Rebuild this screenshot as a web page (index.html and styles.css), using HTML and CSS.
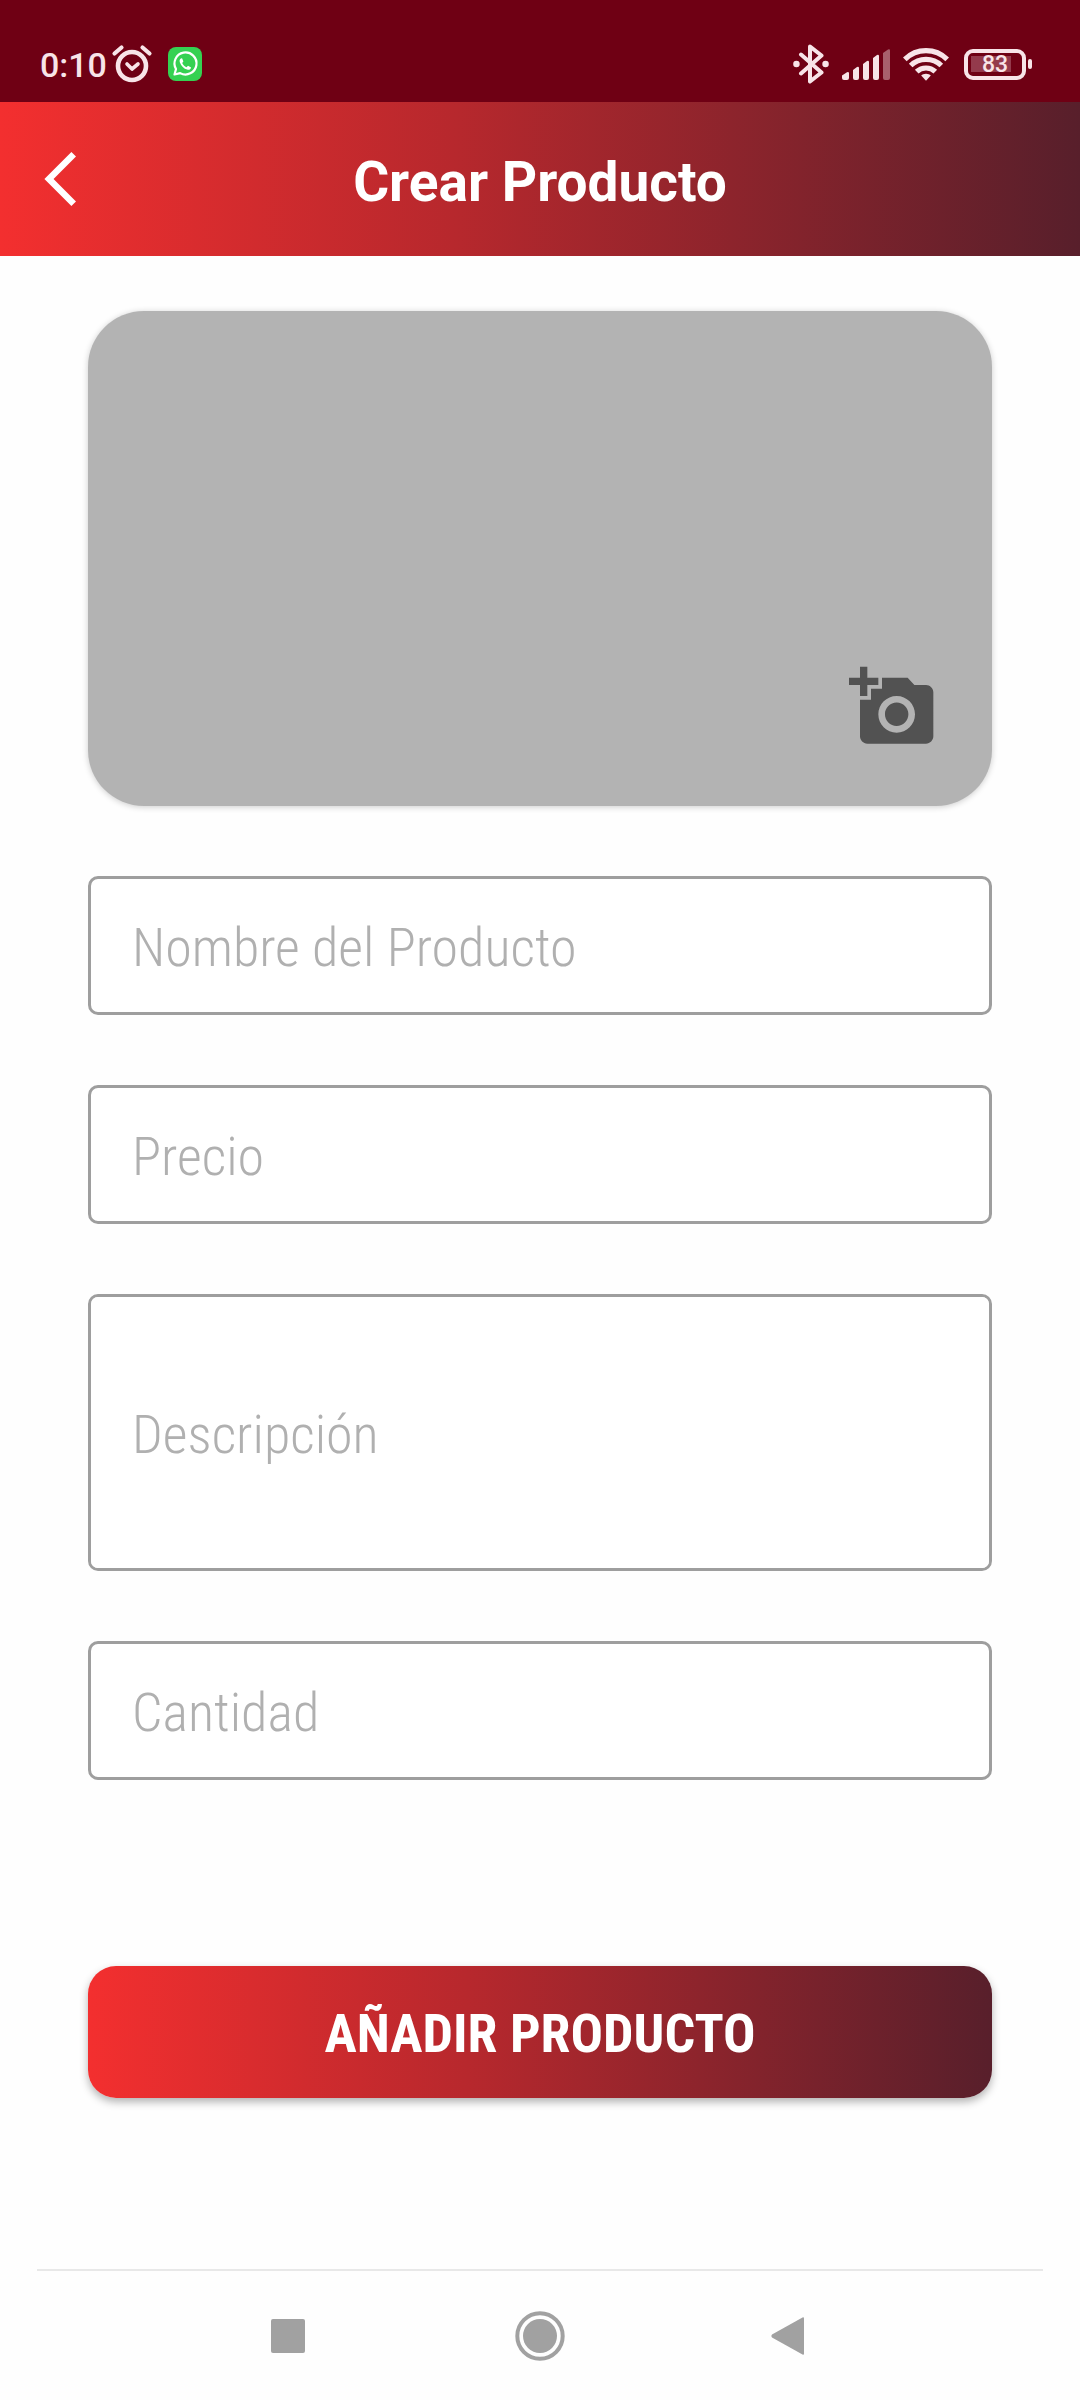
FILE: index.html
```html
<!DOCTYPE html>
<html lang="es">
<head>
<meta charset="utf-8">
<meta name="viewport" content="width=device-width, initial-scale=1">
<title>Crear Producto</title>
<link rel="stylesheet" href="styles.css">
</head>
<body>
<div class="status-bar">
  <div class="status-group status-start">
    <span class="clock">0:10</span>
    <svg class="alarm" width="42" height="40" viewBox="0 0 42 40" fill="none" stroke="currentColor" stroke-width="4.600" stroke-linecap="round" aria-hidden="true">
      <circle cx="21" cy="22" r="14"/>
      <path d="M16 20l5 5 6-5" stroke-width="3.600" stroke-linejoin="round"/>
      <path d="M3.500 9.500l7-6M31.500 3.500l7 6" stroke-width="4.200"/>
    </svg>
    <svg class="chat" width="34" height="34" viewBox="0 0 34 34" aria-hidden="true">
      <rect width="34" height="34" rx="8" fill="#35d152"/>
      <path d="M6.500 27.500l1.500-5.500a11 11 0 1 1 4.200 4.100z" fill="none" stroke="#fff" stroke-width="2.200" stroke-linejoin="round"/>
      <path d="M13.200 11.200c-1.500.7-2 2.300-1.300 4.200 1.300 3.600 4 6.200 7.200 7.200 2 .6 3.600-.3 4-2.200l-3.100-1.700-1.500 1.500c-2-.7-3.500-2.300-4.300-4.200l1.200-1.400-1.200-3.200z" fill="#fff"/>
    </svg>
  </div>
  <div class="status-group status-end">
    <svg width="36" height="40" viewBox="0 0 36 40" fill="none" stroke="currentColor" stroke-width="4" stroke-linejoin="round" stroke-linecap="round" aria-hidden="true">
      <path d="M8 10.500l20.500 18-11.500 9V2.500l11.500 9L8 29.500"/>
      <path d="M3.400 20h.1M32.500 20h.1" stroke-width="6.400"/>
    </svg>
    <svg class="signal" width="48" height="31" viewBox="0 0 48 31" fill="currentColor" aria-hidden="true">
      <path d="M0 26.500l5-3.200q2-.8 2 1.200V29q0 2-2 2H2q-2 0-2-2zM11 21l4-3q2-.8 2 1.200V29q0 2-2 2h-2q-2 0-2-2zM21 15l4-3q2-.8 2 1.200V29q0 2-2 2h-2q-2 0-2-2zM31 9l4-3q2-.8 2 1.200V29q0 2-2 2h-2q-2 0-2-2z"/>
      <path d="M41 4l5-3.500q2-.8 2 1.200V29q0 2-2 2h-3q-2 0-2-2z" opacity=".42"/>
    </svg>
    <svg class="wifi" width="46" height="34" viewBox="0 0 46 34" fill="none" stroke="currentColor" stroke-width="5.200" aria-hidden="true">
      <path d="M1.800 12.300a30 30 0 0 1 42.400 0M7.700 18.500a22 22 0 0 1 30.600 0M13.700 24.700a13.500 13.500 0 0 1 18.600 0"/>
      <path d="M23 26.800c2 0 3.700.7 4.800 1.800L23 33.800l-4.800-5.200c1.100-1.100 2.800-1.800 4.800-1.800z" fill="currentColor" stroke="none"/>
    </svg>
    <div class="battery"><span class="battery-level">83</span></div>
  </div>
</div>

<header class="app-header">
  <button class="back" type="button" aria-label="Volver">
    <svg width="34" height="54" viewBox="0 0 34 54" fill="none" stroke="currentColor" stroke-width="6.500" aria-hidden="true"><path d="M29.700 2.300L5 27l24.700 24.700"/></svg>
  </button>
  <h1 class="title">Crear Producto</h1>
</header>

<main class="content">
  <form class="product-form">
    <button class="photo" type="button" aria-label="Añadir foto">
      <svg width="88" height="88" viewBox="0 0 24 24" fill="currentColor" aria-hidden="true"><path d="M3 4V1h2v3h3v2H5v3H3V6H0V4h3zm3 6V7h3V4h7l1.830 2H21c1.100 0 2 .9 2 2v12c0 1.100-.9 2-2 2H5c-1.100 0-2-.9-2-2V10h3zm7 9c2.760 0 5-2.240 5-5s-2.240-5-5-5-5 2.240-5 5 2.240 5 5 5zm-3.200-5c0 1.770 1.430 3.200 3.200 3.200s3.200-1.430 3.200-3.200-1.430-3.200-3.200-3.200-3.200 1.430-3.200 3.200z"/></svg>
    </button>
    <input class="field" type="text" aria-label="Nombre del Producto" placeholder="Nombre del Producto">
    <input class="field" type="text" inputmode="decimal" aria-label="Precio" placeholder="Precio">
    <textarea class="field field-tall" rows="1" aria-label="Descripción" placeholder="Descripción"></textarea>
    <input class="field" type="text" inputmode="numeric" aria-label="Cantidad" placeholder="Cantidad">
    <button class="submit" type="submit">AÑADIR PRODUCTO</button>
  </form>
</main>

<nav class="system-nav" aria-label="Sistema">
  <button class="nav-key" type="button" aria-label="Recientes">
    <svg width="50" height="50" viewBox="0 0 50 50" fill="currentColor" aria-hidden="true"><rect x="8" y="8" width="34" height="34" rx="2"/></svg>
  </button>
  <button class="nav-key" type="button" aria-label="Inicio">
    <svg width="50" height="50" viewBox="0 0 50 50" fill="currentColor" aria-hidden="true"><circle cx="25" cy="25" r="17"/><circle cx="25" cy="25" r="22.700" fill="none" stroke="currentColor" stroke-width="4"/></svg>
  </button>
  <button class="nav-key" type="button" aria-label="Atrás">
    <svg width="50" height="50" viewBox="0 0 50 50" fill="currentColor" aria-hidden="true"><path d="M35.500 6.500q1.500-.8 1.500 1v35q0 1.800-1.500 1L5 26.500q-1.500-1.500 0-3z"/></svg>
  </button>
</nav>
</body>
</html>
```
FILE: styles.css
```css
:root {
  --brand-gradient: linear-gradient(90deg, #f32f2f 0%, #b7282d 42%, #581f2b 100%);
  --form-font: "Roboto Condensed", "Liberation Sans Narrow", Roboto, sans-serif;
}

* {
  box-sizing: border-box;
}

body {
  margin: 0;
  min-height: 100vh;
  display: flex;
  flex-direction: column;
  background: #fefefe;
  font-family: Roboto, sans-serif;
}

svg {
  display: block;
  flex: none;
}

button {
  border: 0;
  padding: 0;
  background: none;
  color: inherit;
  font: inherit;
  cursor: pointer;
}

.status-bar {
  display: flex;
  justify-content: space-between;
  align-items: flex-end;
  height: 102px;
  padding: 0 48px 18px 40px;
  background: #6f0014;
  color: #f8e4e8;
}

.status-group {
  display: flex;
  align-items: center;
  height: 40px;
}

.clock {
  padding-top: 2px;
  font-size: 34px;
  line-height: 40px;
  font-weight: 500;
}

.alarm {
  margin-left: 4px;
}

.chat {
  margin-left: 15px;
}

.signal {
  margin-left: 13px;
}

.wifi {
  margin-left: 13px;
}

.battery {
  position: relative;
  display: flex;
  align-items: center;
  justify-content: center;
  width: 62px;
  height: 31px;
  margin: 0 6px 0 15px;
  border: 4px solid currentColor;
  border-radius: 9px;
  background: linear-gradient(#943a4c, #943a4c) 3px 50% / 40px 16px no-repeat;
}

.battery::after {
  content: "";
  position: absolute;
  left: 60px;
  top: 6px;
  width: 4px;
  height: 10px;
  border-radius: 2px;
  background: currentColor;
}

.battery-level {
  padding-top: 2px;
  font-size: 23px;
  line-height: 24px;
  font-weight: 500;
}

.app-header {
  display: grid;
  grid-template-columns: 120px 1fr 120px;
  align-items: center;
  height: 154px;
  background: var(--brand-gradient);
  color: #fff;
}

.back {
  justify-self: start;
  padding-left: 44px;
}

.title {
  margin: 0;
  padding-top: 6px;
  text-align: center;
  font-size: 55px;
  line-height: 64px;
  font-weight: 700;
}

.content {
  flex: 1;
  padding: 55px 88px;
}

.product-form {
  display: flex;
  flex-direction: column;
  gap: 70px;
}

.photo {
  display: flex;
  align-items: flex-end;
  justify-content: flex-end;
  height: 495px;
  padding: 55px;
  border-radius: 56px;
  background: #b3b3b3;
  color: #525252;
  box-shadow: 0 1px 6px rgba(0, 0, 0, 0.2);
}

.field {
  display: block;
  width: 100%;
  height: 139px;
  margin: 0;
  padding: 4px 41px 0;
  border: 3px solid #9e9e9e;
  border-radius: 10px;
  background: #fff;
  color: #333;
  font-family: var(--form-font);
  font-size: 54px;
  line-height: 64px;
  font-weight: 300;
  resize: none;
}

.field::placeholder {
  color: #b0b0b0;
  opacity: 1;
}

.field-tall {
  height: 277px;
  padding: 106px 41px;
}

.submit {
  height: 132px;
  margin-top: 116px;
  padding-top: 4px;
  border-radius: 28px;
  background: var(--brand-gradient);
  color: #fff;
  font-family: var(--form-font);
  font-size: 54px;
  line-height: 64px;
  font-weight: 700;
  box-shadow: 0 4px 8px rgba(0, 0, 0, 0.3);
}

.system-nav {
  display: flex;
  justify-content: center;
  gap: 202px;
  height: 131px;
  margin: 0 37px;
  padding-top: 40px;
  border-top: 2px solid #e8e8e8;
  color: #a1a1a1;
}

.nav-key {
  height: 50px;
}
```
